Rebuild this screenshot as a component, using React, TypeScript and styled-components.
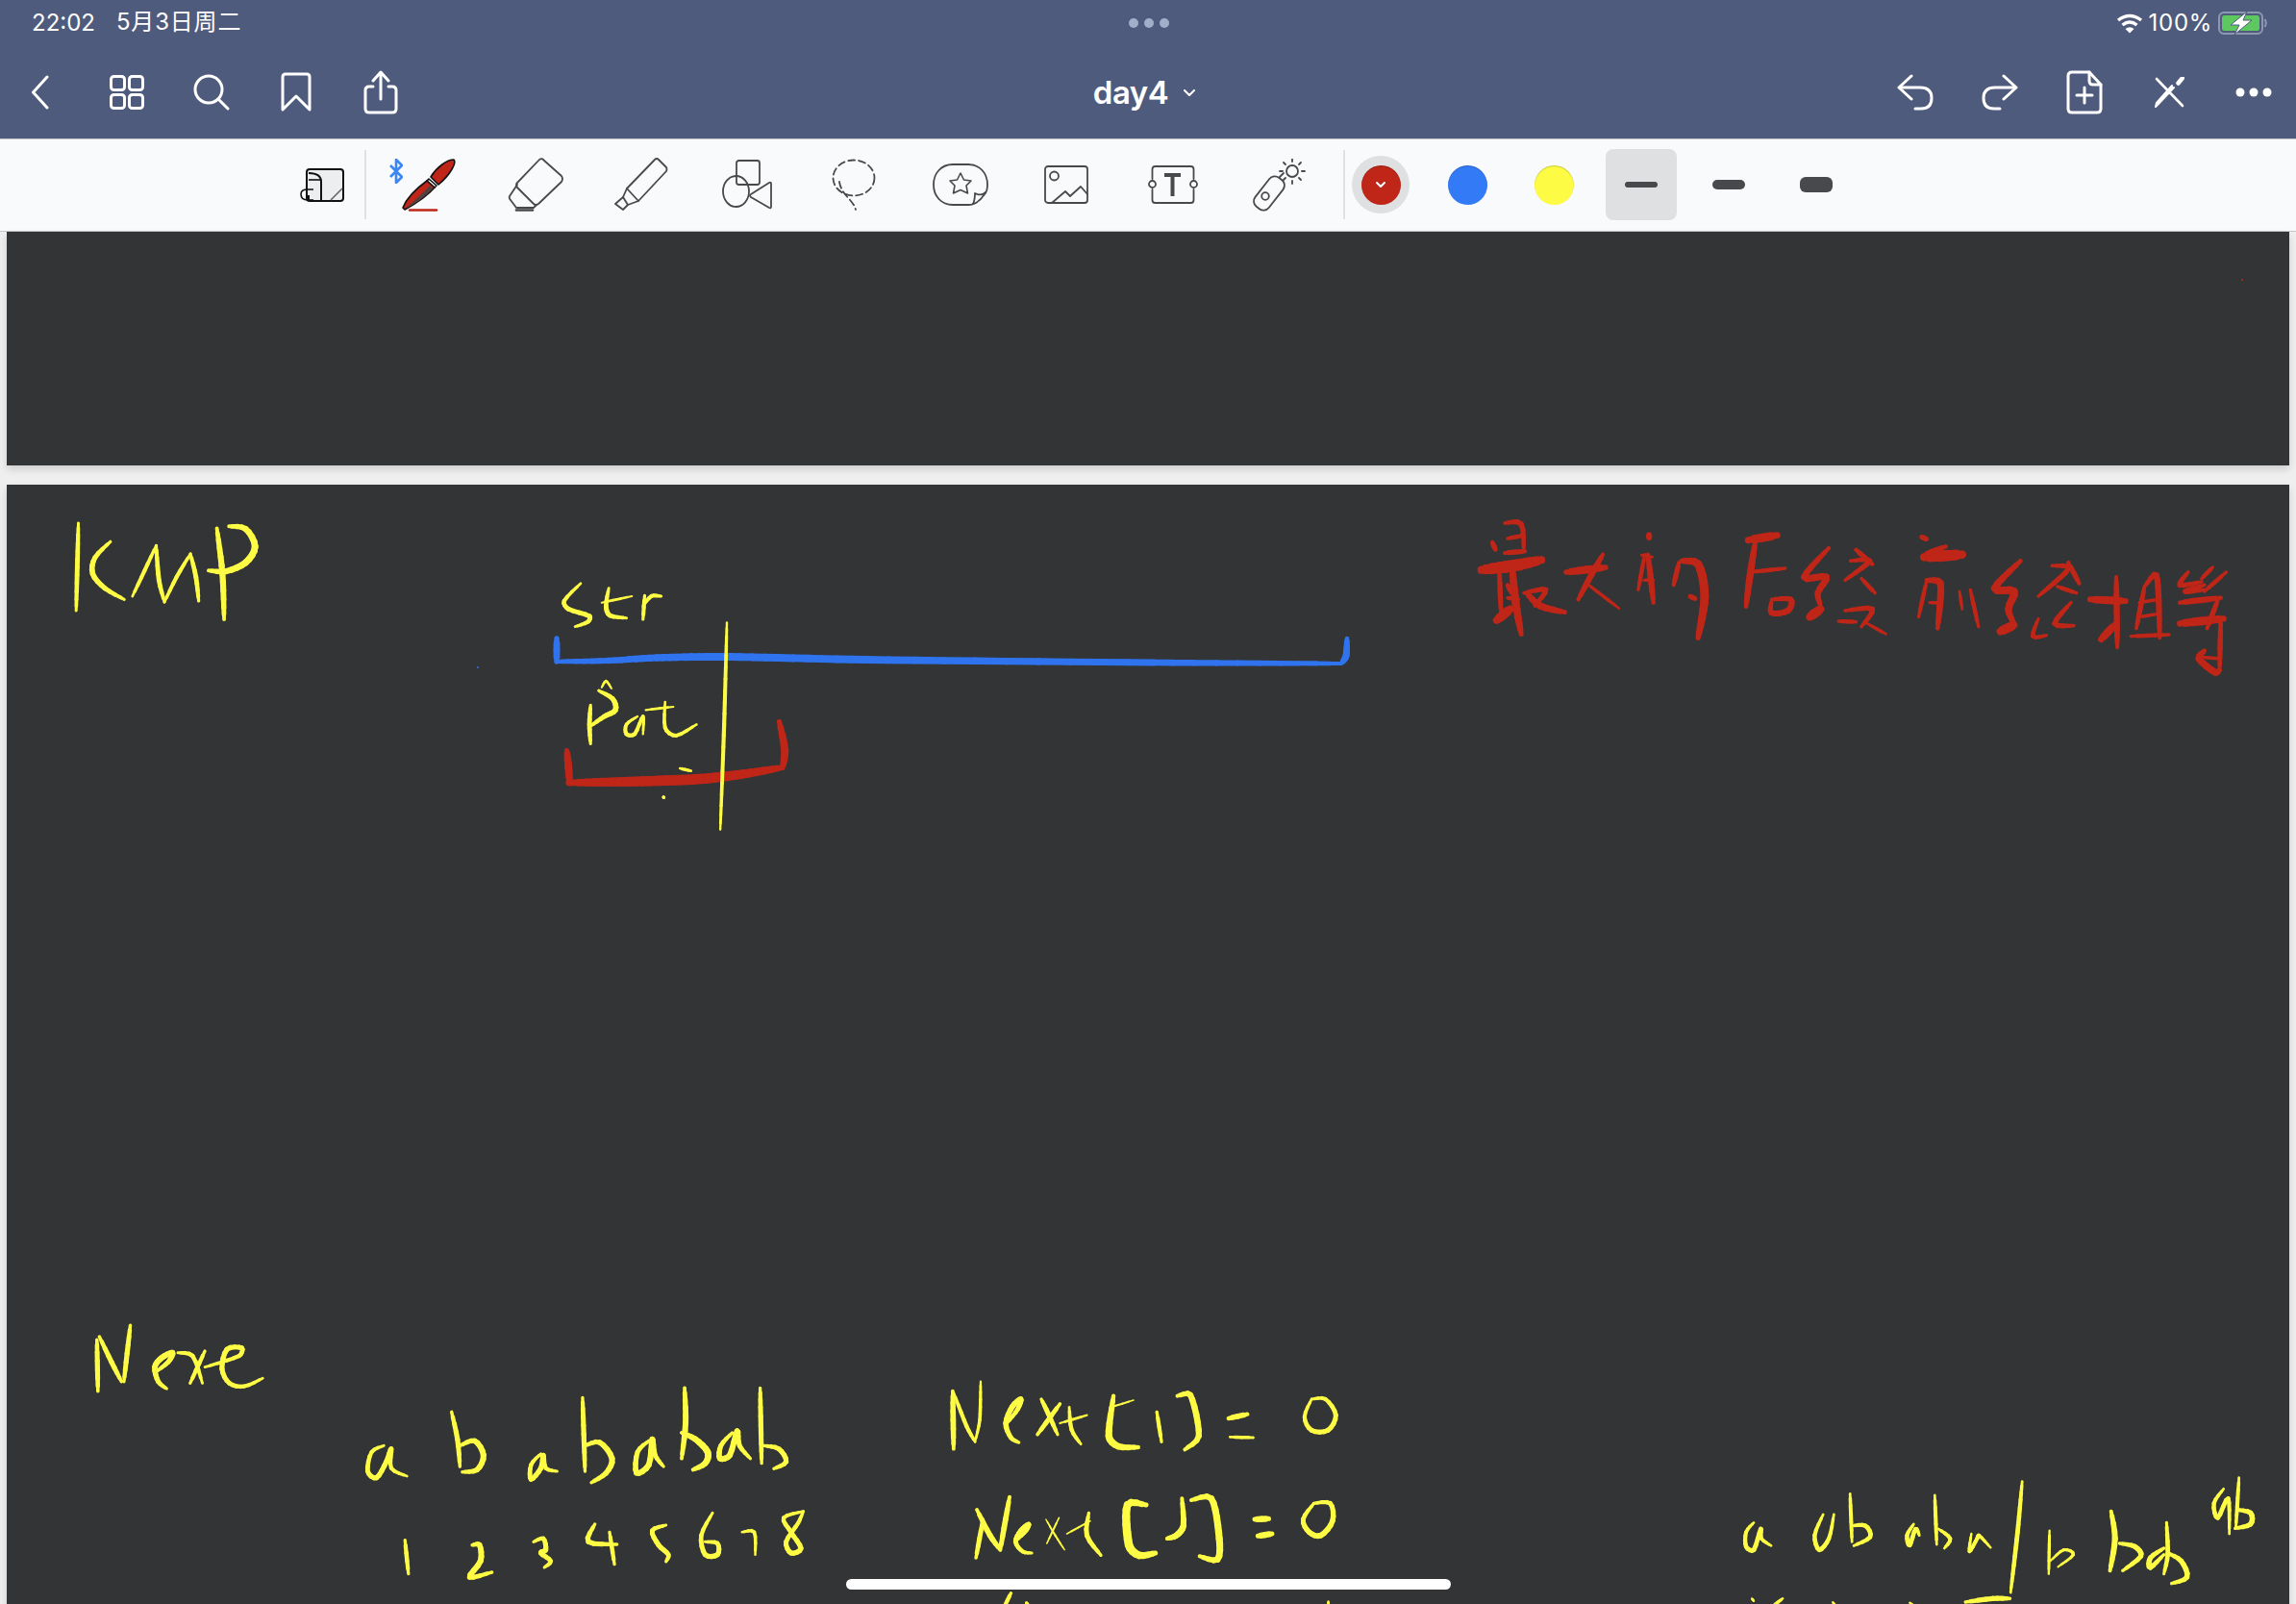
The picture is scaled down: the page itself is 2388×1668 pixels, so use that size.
import React from 'react';
import styled, { createGlobalStyle } from 'styled-components';

const colors = {
  bar: '#4f5b7d',
  toolbar: '#f9fafb',
  desk: '#efeff0',
  page: '#323436',
  icon: '#47494c',
  yellow: '#fdfb44',
  red: '#bf2618',
  blue: '#2f74ee',
};

const GlobalStyle = createGlobalStyle`
  html, body {
    margin: 0;
    padding: 0;
    background: ${colors.desk};
  }
  body {
    font-family: Inter, "Noto Sans CJK SC", sans-serif;
  }
`;

const Screen = styled.div`
  position: relative;
  width: 2388px;
  height: 1668px;
  display: flex;
  flex-direction: column;
  overflow: hidden;
`;

const Header = styled.header`
  flex: none;
  height: 144px;
  background: ${colors.bar};
  color: #fff;
  border-bottom: 1px solid #c4c6ca;
`;

const StatusBar = styled.div`
  height: 48px;
  display: grid;
  grid-template-columns: 1fr auto 1fr;
  align-items: center;
  padding: 0 29px 0 33px;
  font-size: 24px;
  line-height: 24px;
`;

const StatusLeft = styled.div`
  display: flex;
  align-items: center;
  gap: 22px;
`;

const StatusDate = styled.span`
  letter-spacing: 0.8px;
  position: relative;
  top: -1px;
`;

const StatusRight = styled.div`
  display: flex;
  justify-content: flex-end;
  align-items: center;
  gap: 6px;
  letter-spacing: 0.7px;
`;

const MultitaskDots = styled.div`
  display: flex;
  gap: 6px;
  margin-right: 2px;
`;

const MultitaskDot = styled.span`
  width: 10px;
  height: 10px;
  border-radius: 50%;
  background: #a3aeca;
`;

const NavBar = styled.nav`
  height: 96px;
  display: grid;
  grid-template-columns: 1fr auto 1fr;
  align-items: center;
`;

const NavGroup = styled.div<{ $end?: boolean }>`
  display: flex;
  justify-content: ${(p) => (p.$end ? 'flex-end' : 'flex-start')};
`;

const NavSlot = styled.div`
  width: 88px;
  height: 96px;
  display: flex;
  align-items: center;
  justify-content: center;
`;

const DocTitle = styled.div`
  display: flex;
  align-items: center;
  gap: 16px;
  margin-right: 8px;
  font-size: 33px;
  font-weight: 600;
  letter-spacing: -0.5px;
`;

const Toolbar = styled.div`
  flex: none;
  height: 94px;
  display: flex;
  align-items: center;
  padding: 0 0 1px 291px;
  background: ${colors.toolbar};
  border-bottom: 1px solid #c4c6ca;
`;

const TemplateSlot = styled.div`
  width: 88px;
  display: flex;
  justify-content: center;
`;

const Divider = styled.div<{ $gap?: number }>`
  width: 2px;
  height: 72px;
  margin-left: ${(p) => p.$gap ?? 0}px;
  background: #dfe1e3;
`;

const ToolGroup = styled.div`
  display: flex;
  margin-left: 10px;
`;

const ToolSlot = styled.div`
  position: relative;
  width: 110.5px;
  height: 72px;
  display: flex;
  align-items: center;
  justify-content: center;
`;

const BluetoothBadge = styled.span`
  position: absolute;
  left: 14px;
  top: 9px;
  display: flex;
`;

const SwatchGroup = styled.div`
  display: flex;
  gap: 30px;
  margin-left: 7px;
`;

const Swatch = styled.div<{ $active?: boolean }>`
  width: 60px;
  height: 60px;
  border-radius: 50%;
  display: flex;
  align-items: center;
  justify-content: center;
  background: ${(p) => (p.$active ? '#dfe0e2' : 'transparent')};
`;

const SwatchDot = styled.span<{ $color: string }>`
  width: 41px;
  height: 41px;
  border-radius: 50%;
  display: flex;
  align-items: center;
  justify-content: center;
  background: ${(p) => p.$color};
  box-shadow: inset 0 1px 1px rgba(0, 0, 0, 0.2);
`;

const WidthGroup = styled.div`
  display: flex;
  gap: 17px;
  margin-left: 24px;
`;

const WidthOption = styled.div<{ $active?: boolean }>`
  width: 74px;
  height: 74px;
  border-radius: 8px;
  display: flex;
  align-items: center;
  justify-content: center;
  background: ${(p) => (p.$active ? '#dfe0e2' : 'transparent')};
`;

const WidthLine = styled.span<{ $size: number }>`
  width: 34px;
  height: ${(p) => p.$size}px;
  border-radius: ${(p) => Math.min(p.$size / 2, 6)}px;
  background: ${colors.icon};
`;

const Desk = styled.main`
  flex: 1;
  min-height: 0;
  display: flex;
  flex-direction: column;
  gap: 20px;
  padding: 0 7px;
  background: ${colors.desk};
`;

const Page = styled.section<{ $grow?: boolean }>`
  position: relative;
  flex: ${(p) => (p.$grow ? '1' : 'none')};
  height: ${(p) => (p.$grow ? 'auto' : '243px')};
  background: ${colors.page};
  box-shadow: 0 4px 8px rgba(0, 0, 0, 0.14);
  overflow: hidden;
`;

const InkLayer = styled.svg`
  position: absolute;
  inset: 0;
  width: 100%;
  height: 100%;
`;

const HomeIndicator = styled.div`
  position: absolute;
  left: 880px;
  bottom: 15px;
  width: 629px;
  height: 11px;
  border-radius: 6px;
  background: #fff;
`;

// ---- ink: strokes are [width, x, y, x, y, ...] in the coordinates of a crop ----

type Stroke = number[];
type InkGroup = { ox: number; oy: number; sx: number; sy: number; weight: number; color: string; strokes: Stroke[] };

const YELLOW_TOP: Stroke[] = [
  [7, 142, 222, 140, 360, 138, 495],
  [8, 200, 280, 172, 330, 168, 380, 190, 425, 225, 460],
  [6, 240, 450, 262, 370, 283, 292],
  [7, 283, 292, 288, 400, 298, 468],
  [6, 298, 468, 320, 390, 345, 318],
  [7, 345, 318, 355, 390, 360, 465],
  [9, 393, 238, 403, 380, 406, 522],
  [10, 415, 232, 445, 240, 462, 295, 445, 345, 410, 372, 378, 370],
  [7, 1052, 410, 1022, 465, 1030, 490, 1068, 512, 1065, 530, 1042, 545],
  [7, 1103, 425, 1098, 480, 1105, 510, 1135, 518],
  [4, 1090, 470, 1145, 450],
  [6, 1168, 448, 1165, 522],
  [6, 1165, 480, 1180, 450, 1198, 450],
  [6, 1317, 532, 1312, 850, 1305, 1178],
  [7, 1070, 790, 1068, 850, 1070, 910],
  [8, 1085, 745, 1110, 770, 1115, 805, 1095, 825, 1070, 855],
  [4, 1090, 735, 1098, 715, 1108, 738],
  [6, 1155, 825, 1135, 850, 1135, 880, 1150, 880, 1165, 825, 1165, 880],
  [6, 1205, 780, 1205, 860, 1225, 885, 1262, 850],
  [4, 1170, 805, 1220, 795],
  [5, 1232, 987, 1252, 995],
  [5, 1202, 1077, 1203, 1078],
];

const RED_TOP: Stroke[] = [
  [11, 1027, 932, 1030, 985, 1032, 1035],
  [15, 1030, 1032, 1150, 1028, 1270, 1020, 1345, 1005, 1415, 985],
  [11, 1418, 985, 1422, 930, 1412, 842],
];

const RED_TITLE: Stroke[] = [
  [6, 115, 72, 145, 75, 150, 160],
  [5, 120, 120, 150, 110],
  [6, 115, 165, 152, 160],
  [6, 92, 132, 98, 155],
  [14, 72, 218, 130, 205, 182, 187],
  [6, 105, 220, 108, 355],
  [9, 128, 200, 135, 320, 145, 418],
  [6, 120, 265, 128, 290],
  [5, 120, 305, 140, 310],
  [6, 150, 290, 190, 280, 170, 330],
  [8, 155, 290, 180, 330, 225, 350],
  [11, 125, 340, 100, 375],
  [9, 228, 225, 300, 210],
  [7, 295, 170, 275, 230, 250, 310],
  [4, 265, 260, 325, 338],
  [7, 380, 108, 380, 118],
  [5, 372, 170, 360, 280],
  [7, 378, 170, 388, 320],
  [4, 366, 172, 386, 178],
  [4, 370, 250, 388, 250],
  [6, 435, 195, 425, 265],
  [10, 440, 190, 470, 200, 482, 300, 470, 430],
  [6, 455, 300, 465, 308],
  [10, 562, 125, 615, 110],
  [8, 575, 130, 565, 240, 558, 332],
  [5, 565, 225, 630, 213],
  [7, 605, 310, 640, 310, 635, 345, 605, 352, 605, 315],
  [8, 710, 150, 665, 240, 705, 240, 690, 290, 695, 330],
  [11, 695, 340, 675, 365],
  [6, 760, 155, 790, 200],
  [6, 750, 190, 785, 190, 740, 250],
  [5, 770, 245, 795, 290],
  [6, 740, 345, 790, 340, 770, 395],
  [5, 728, 378, 760, 380],
  [4, 780, 385, 815, 418],
  [6, 880, 115, 890, 122],
  [13, 885, 178, 955, 170],
  [6, 925, 145, 890, 165],
  [5, 890, 250, 875, 365],
  [8, 890, 250, 915, 260, 910, 400],
  [4, 895, 320, 912, 320],
  [4, 950, 285, 955, 340],
  [5, 970, 280, 985, 395],
  [9, 1062, 190, 1015, 275, 1050, 285, 1040, 340, 1050, 385],
  [11, 1050, 390, 1025, 410],
  [6, 1150, 195, 1170, 260],
  [6, 1120, 205, 1150, 215, 1095, 300],
  [5, 1130, 270, 1165, 290],
  [6, 1155, 320, 1125, 385, 1160, 392],
  [5, 1095, 370, 1085, 425, 1110, 422],
  [9, 1190, 310, 1255, 315],
  [7, 1238, 240, 1240, 460],
  [9, 1235, 390, 1210, 435],
  [6, 1290, 270, 1275, 400],
  [7, 1290, 270, 1312, 235, 1318, 430],
  [4, 1280, 320, 1315, 310],
  [4, 1280, 365, 1315, 355],
  [5, 1265, 425, 1335, 420],
  [6, 1370, 225, 1355, 265, 1395, 255],
  [6, 1400, 265, 1365, 285, 1400, 280],
  [5, 1440, 225, 1400, 285],
  [5, 1415, 210, 1395, 245],
  [7, 1355, 320, 1430, 305],
  [10, 1355, 385, 1435, 370],
  [6, 1425, 310, 1405, 400],
  [6, 1430, 370, 1428, 530],
  [8, 1400, 470, 1390, 495, 1420, 538, 1428, 530],
  [4, 1395, 490, 1430, 495],
];

const YELLOW_NEXT: Stroke[] = [
  [7, 80, 160, 82, 320],
  [7, 85, 150, 110, 230, 130, 290],
  [7, 148, 115, 135, 290],
  [8, 198, 262, 226, 228, 234, 200, 212, 216, 198, 245, 205, 290, 222, 312],
  [6, 245, 200, 275, 210, 295, 295],
  [6, 300, 195, 270, 295],
  [7, 300, 245, 370, 210, 375, 185, 345, 190, 335, 250, 350, 295, 380, 305, 418, 280],
  [7, 665, 490, 640, 510, 632, 570, 650, 590, 670, 540, 680, 500, 680, 560, 712, 585],
  [7, 803, 385, 815, 470, 820, 555],
  [8, 820, 490, 850, 475, 868, 520, 855, 565, 825, 572],
  [7, 985, 515, 965, 550, 965, 595, 985, 560, 990, 520, 995, 560, 1018, 570],
  [7, 1070, 340, 1075, 570],
  [8, 1075, 490, 1105, 480, 1130, 530, 1118, 575, 1088, 605],
  [8, 1205, 475, 1182, 510, 1180, 575, 1205, 550, 1212, 470, 1218, 520, 1235, 555],
  [8, 1278, 310, 1280, 420, 1272, 530],
  [9, 1272, 450, 1300, 470, 1325, 510, 1320, 545, 1295, 565],
  [8, 1375, 450, 1352, 490, 1350, 530, 1370, 520, 1385, 445, 1390, 490, 1412, 530],
  [7, 1432, 310, 1435, 545],
  [7, 1440, 490, 1470, 500, 1485, 540, 1460, 562],
  [6, 708, 785, 715, 890],
  [8, 845, 800, 860, 800, 862, 850, 840, 900, 885, 885],
  [7, 970, 790, 990, 780, 995, 815, 985, 825, 1005, 850, 992, 870],
  [7, 1095, 735, 1082, 790, 1140, 798],
  [6, 1125, 760, 1135, 860],
  [7, 1240, 738, 1212, 755, 1225, 800, 1245, 830, 1240, 852],
  [7, 1335, 700, 1312, 770, 1320, 830, 1345, 830, 1345, 795, 1320, 790],
  [5, 1395, 760, 1420, 760, 1422, 830],
  [7, 1520, 695, 1480, 715, 1495, 760, 1515, 810, 1495, 825, 1485, 790, 1510, 730, 1520, 695],
];

const YELLOW_FORMULA: Stroke[] = [
  [8, 270, 140, 272, 320],
  [6, 272, 145, 300, 250, 318, 298],
  [5, 330, 110, 328, 230, 318, 298],
  [8, 388, 238, 410, 195, 416, 165, 398, 188, 384, 240, 395, 285, 412, 300],
  [7, 460, 165, 475, 210, 495, 275],
  [7, 500, 180, 452, 275],
  [6, 520, 190, 525, 260, 545, 305],
  [4, 500, 240, 558, 215],
  [10, 615, 155, 605, 280, 625, 312, 668, 315],
  [3, 610, 190, 658, 168],
  [6, 708, 205, 718, 298],
  [9, 752, 155, 780, 152, 798, 280, 768, 322],
  [8, 862, 225, 902, 212],
  [5, 865, 283, 915, 285],
  [7, 1040, 165, 1025, 220, 1040, 262, 1075, 262, 1092, 215, 1070, 165, 1040, 165],
  [7, 335, 540, 320, 660],
  [8, 322, 510, 350, 590, 372, 635],
  [8, 392, 470, 372, 635],
  [7, 408, 605, 428, 575, 433, 555, 416, 575, 405, 610, 420, 640, 440, 645],
  [3, 470, 540, 490, 590, 510, 635],
  [3, 498, 535, 472, 615],
  [7, 562, 520, 558, 590, 588, 652],
  [3, 515, 585, 565, 545],
  [12, 685, 495, 645, 495, 648, 620, 670, 652, 705, 645],
  [9, 762, 475, 765, 560, 750, 590, 730, 600],
  [10, 782, 480, 825, 475, 842, 600, 838, 665, 800, 655],
  [9, 918, 540, 948, 538],
  [9, 925, 592, 955, 585],
  [8, 1045, 490, 1022, 540, 1035, 580, 1060, 590, 1085, 545, 1080, 490, 1045, 490],
  [6, 395, 770, 380, 815],
  [5, 428, 800, 432, 808],
  [4, 1076, 796, 1076, 815],
];

const YELLOW_RIGHT: Stroke[] = [
  [7, 160, 250, 140, 280, 140, 325, 160, 335, 178, 270, 180, 300, 205, 322],
  [7, 340, 225, 318, 290, 330, 335, 355, 300, 368, 225],
  [6, 410, 160, 415, 310],
  [7, 415, 260, 450, 260, 462, 295, 420, 322],
  [7, 575, 255, 558, 290, 565, 320, 580, 270, 590, 290],
  [6, 630, 165, 635, 318],
  [6, 640, 270, 670, 300, 655, 330],
  [6, 725, 285, 720, 340, 740, 300, 745, 290, 775, 328],
  [7, 857, 122, 845, 280, 827, 468],
  [5, 928, 275, 926, 410],
  [5, 930, 370, 965, 335, 990, 350, 950, 388],
  [9, 1088, 215, 1098, 300, 1085, 400],
  [8, 1110, 315, 1150, 325, 1165, 355, 1118, 400],
  [8, 1225, 330, 1190, 360, 1190, 390, 1225, 350],
  [7, 1232, 250, 1235, 350, 1225, 410],
  [8, 1235, 345, 1270, 370, 1285, 420, 1245, 440],
  [7, 1380, 145, 1355, 190, 1365, 235, 1392, 175, 1395, 285],
  [6, 1420, 110, 1412, 265],
  [8, 1415, 210, 1450, 220, 1450, 255, 1410, 268],
  [4, 155, 487, 160, 495],
  [5, 235, 487, 210, 510],
  [4, 365, 498, 372, 510],
  [4, 565, 500, 575, 510],
  [8, 710, 498, 780, 487, 825, 487],
];

const BLUE_LINE: Stroke[] = [
  [7, 579, 664, 579, 688],
  [8, 579, 688, 632, 687, 683, 684, 758, 683, 900, 686, 1200, 689, 1395, 690],
  [7, 1396, 689, 1400, 682, 1401, 664],
];

const inkGroups: InkGroup[] = [
  { ox: 0, oy: 0, sx: 1, sy: 1, weight: 1, color: colors.blue, strokes: BLUE_LINE },
  { ox: 0, oy: 470, sx: 1.742, sy: 3, weight: 0.72, color: colors.red, strokes: RED_TOP },
  { ox: 0, oy: 470, sx: 1.742, sy: 3, weight: 0.7, color: colors.yellow, strokes: YELLOW_TOP },
  { ox: 1500, oy: 520, sx: 1.766, sy: 3, weight: 0.9, color: colors.red, strokes: RED_TITLE },
  { ox: 60, oy: 1340, sx: 1.96, sy: 3, weight: 0.75, color: colors.yellow, strokes: YELLOW_NEXT },
  { ox: 860, oy: 1400, sx: 2.063, sy: 3, weight: 0.72, color: colors.yellow, strokes: YELLOW_FORMULA },
  { ox: 1760, oy: 1500, sx: 2.497, sy: 3, weight: 0.68, color: colors.yellow, strokes: YELLOW_RIGHT },
];

type Pt = [number, number];

// tangent at b, never longer than the span it leads into, so long spans don't overshoot
function tangent(a: Pt, b: Pt, c: Pt, limit: number): Pt {
  const tx = (c[0] - a[0]) / 2;
  const ty = (c[1] - a[1]) / 2;
  const len = Math.hypot(tx, ty) || 1;
  const k = Math.min(1, limit / len);
  return [tx * k, ty * k];
}

function sampleStroke(pts: Pt[]) {
  const out: Pt[] = [];
  for (let i = 0; i < pts.length - 1; i++) {
    const p0 = pts[Math.max(i - 1, 0)];
    const p1 = pts[i];
    const p2 = pts[i + 1];
    const p3 = pts[Math.min(i + 2, pts.length - 1)];
    const span = Math.hypot(p2[0] - p1[0], p2[1] - p1[1]);
    const m1 = tangent(p0, p1, p2, span);
    const m2 = tangent(p1, p2, p3, span);
    const steps = Math.max(4, Math.min(10, Math.ceil(span / 8)));
    for (let k = 0; k < steps; k++) {
      const t = k / steps;
      const t2 = t * t;
      const t3 = t2 * t;
      const h = (a: number, b: number, ma: number, mb: number) =>
        (2 * t3 - 3 * t2 + 1) * a + (t3 - 2 * t2 + t) * ma + (-2 * t3 + 3 * t2) * b + (t3 - t2) * mb;
      out.push([h(p1[0], p2[0], m1[0], m2[0]), h(p1[1], p2[1], m1[1], m2[1])]);
    }
  }
  out.push(pts[pts.length - 1]);
  return out;
}

function InkStroke({ group, stroke }: { group: InkGroup; stroke: Stroke }) {
  const [width, ...flat] = stroke;
  const pts: Pt[] = [];
  for (let i = 0; i < flat.length; i += 2) {
    pts.push([group.ox + flat[i] / group.sx, group.oy + flat[i + 1] / group.sy]);
  }
  const line = sampleStroke(pts);
  const base = width * group.weight;
  return (
    <g stroke={group.color} strokeLinecap="round">
      {line.slice(1).map((p, i) => {
        const t = (i + 0.5) / (line.length - 1);
        const w = base * (0.4 + 0.6 * Math.pow(Math.sin(Math.PI * t), 0.5));
        return <line key={i} x1={line[i][0]} y1={line[i][1]} x2={p[0]} y2={p[1]} strokeWidth={w} />;
      })}
    </g>
  );
}

// ---- icons ----

type SvgProps = { w: number; h: number; children: React.ReactNode; stroke?: string; sw?: number };

const Svg = ({ w, h, children, stroke = '#fff', sw = 3 }: SvgProps) => (
  <svg
    width={w}
    height={h}
    viewBox={`0 0 ${w} ${h}`}
    fill="none"
    stroke={stroke}
    strokeWidth={sw}
    strokeLinecap="round"
    strokeLinejoin="round"
  >
    {children}
  </svg>
);

const Back = () => (
  <Svg w={22} h={36}>
    <path d="M16 2 L1.5 18 L16 34" />
  </Svg>
);
const Grid = () => (
  <Svg w={36} h={36}>
    <rect x="1.5" y="1.5" width="14" height="14" rx="3" />
    <rect x="20.5" y="1.5" width="14" height="14" rx="3" />
    <rect x="1.5" y="20.5" width="14" height="14" rx="3" />
    <rect x="20.5" y="20.5" width="14" height="14" rx="3" />
  </Svg>
);
const Search = () => (
  <Svg w={38} h={38}>
    <circle cx="16" cy="16" r="14" />
    <path d="M26 26 L36 36" />
  </Svg>
);
const Bookmark = () => (
  <Svg w={32} h={42}>
    <path d="M2 39 V5 Q2 2 5 2 H27 Q30 2 30 5 V39 L16 25 Z" />
  </Svg>
);
const Share = () => (
  <Svg w={36} h={46}>
    <path d="M10 17 H6 Q2 17 2 21 V40 Q2 44 6 44 H30 Q34 44 34 40 V21 Q34 17 30 17 H26" />
    <path d="M18 30 V3 M10 11 L18 2 L26 11" />
  </Svg>
);
const Chevron = ({ color = '#fff', size = 12 }: { color?: string; size?: number }) => (
  <Svg w={size} h={Math.round(size * 0.62)} stroke={color} sw={2}>
    <path d={`M1 1 L${size / 2} ${Math.round(size * 0.62) - 1} L${size - 1} 1`} />
  </Svg>
);
const Undo = () => (
  <Svg w={38} h={38}>
    <path d="M15 2 L2 14 L15 26" />
    <path d="M3 14 H24 Q36 14 36 25 Q36 36 25 36 H19" />
  </Svg>
);
const Redo = () => (
  <Svg w={38} h={38}>
    <path d="M23 2 L36 14 L23 26" />
    <path d="M35 14 H14 Q2 14 2 25 Q2 36 13 36 H19" />
  </Svg>
);
const DocPlus = () => (
  <Svg w={38} h={46}>
    <path d="M2 6 Q2 2 6 2 H24 L36 15 V40 Q36 44 32 44 H6 Q2 44 2 40 Z" />
    <path d="M24 2 V11 Q24 15 28 15 H36" />
    <path d="M19 18 V34 M11 26 H27" />
  </Svg>
);
const ToolsCross = () => (
  <Svg w={32} h={32} sw={2.6}>
    <path d="M3 2 L30 30" />
    <path d="M30 1 L25.5 6.5" strokeWidth={4.5} />
    <path d="M21 11 L5 28 L2 31 L3 27 L19 9" fill="#fff" strokeWidth={2} />
  </Svg>
);
const MoreDots = () => (
  <svg width="38" height="10" viewBox="0 0 38 10" fill="#fff">
    <circle cx="5" cy="5" r="4.5" />
    <circle cx="19" cy="5" r="4.5" />
    <circle cx="33" cy="5" r="4.5" />
  </svg>
);
const Wifi = () => (
  <svg width="28" height="21" viewBox="0 0 28 21" fill="none" stroke="#fff" strokeWidth="3.4">
    <path d="M2 7 Q14 -2 26 7" />
    <path d="M6.5 12 Q14 6 21.5 12" />
    <path d="M14 20.5 L9.5 16 Q14 12.6 18.5 16 Z" fill="#fff" stroke="none" />
  </svg>
);
const Battery = () => (
  <svg width="52" height="24" viewBox="0 0 52 24" fill="none">
    <rect x="1" y="1" width="45" height="22" rx="5" stroke="#8e97af" strokeWidth="2" />
    <rect x="4" y="4" width="39" height="16" rx="2.5" fill="#5dc85f" />
    <path d="M48.5 8 Q51 12 48.5 16" stroke="#8e97af" strokeWidth="2" />
    <path d="M30 0 L13 14 H22 L17 24 L35 9 H26 Z" fill="#fff" stroke={colors.bar} strokeWidth="1" />
  </svg>
);

const TemplateIcon = () => (
  <svg width="46" height="35" viewBox="0 0 46 35" fill="none" stroke="#111" strokeWidth="2">
    <rect x="7" y="1" width="38" height="33" rx="3" fill="#eceef0" />
    <path d="M9 34 V28 M22 34 V14 Q22 5 9 5" fill="none" />
    <path d="M9 12 H22" strokeWidth="1.6" />
    <path d="M14 22 H8 Q1 22 1 27 Q1 33 8 33 H14" strokeWidth="1.6" />
    <path d="M32 33 L44 21" stroke="#666" strokeWidth="1.6" />
  </svg>
);
const PenIcon = () => (
  <svg width="57" height="55" viewBox="0 0 57 55" stroke="#111" strokeWidth="1.6" strokeLinejoin="round">
    <path d="M30 19 C36 9 47 1 54 1 C57 4 51 16 38 27 Z" fill={colors.red} />
    <path d="M28 21 L36 28 L34 30 L26 23 Z" fill="#fff" />
    <path d="M26 23 L34 30 C26 39 14 47 3 53 L1 51 C5 41 15 31 26 23 Z" fill={colors.red} />
    <path d="M32 31 C25 39 14 47 4 52 C12 44 22 36 29 28 Z" fill="#54403e" stroke="none" />
    <path d="M8 53.5 H36" stroke={colors.red} strokeWidth="2.5" strokeLinecap="round" />
  </svg>
);
const BluetoothIcon = () => (
  <svg width="14" height="26" viewBox="0 0 14 26" fill="none" stroke="#3a86f5" strokeWidth="2.6" strokeLinejoin="round">
    <path d="M1 7 L13 19 L7 25 V1 L13 7 L1 19" />
  </svg>
);
const EraserIcon = () => (
  <Svg w={58} h={56} stroke={colors.icon} sw={1.8}>
    <path d="M33 2 Q36 0 38 3 L56 19 Q58 22 56 25 L32 48 Q29 50 27 48 L10 31 Q8 28 10 26 Z" />
    <path d="M10 28 L2 40 Q1 42 3 44 L9 52 L27 52 L30 49" />
    <path d="M9 54.5 H26" strokeWidth={2.6} />
  </Svg>
);
const HighlighterIcon = () => (
  <Svg w={56} h={56} stroke={colors.icon} sw={1.8}>
    <path d="M42 2 Q44 0 46 2 L54 10 Q55 12 54 14 L25 45 L13 32 Z" />
    <path d="M13 32 L9 41 L14 49 L25 45" />
    <path d="M9 41 L1 48 L9 54 L14 49" />
  </Svg>
);
const ShapesIcon = () => (
  <Svg w={53} h={52} stroke={colors.icon} sw={1.8}>
    <rect x="15" y="1" width="24" height="25" rx="2.5" />
    <ellipse cx="14.5" cy="33" rx="13.5" ry="16" />
    <path d="M51 25 V49 Q51 51 49 50 L30 39 Q28 37 30 36 L49 24 Q51 23 51 25 Z" />
  </Svg>
);
const LassoIcon = () => (
  <Svg w={46} h={54} stroke={colors.icon} sw={1.8}>
    <g strokeDasharray="7 4">
      <ellipse cx="23" cy="20" rx="21.5" ry="18.5" />
      <path d="M8 24 C10 38 22 42 25 53" />
    </g>
  </Svg>
);
const StickerIcon = () => (
  <Svg w={58} h={44} stroke={colors.icon} sw={1.8}>
    <path d="M21 1 H37 C49 1 57 10 57 22 C57 27 56 30 54 32 C50 38 44 43 37 43 H21 C9 43 1 34 1 22 C1 10 9 1 21 1 Z" />
    <path d="M42 42 C44 38 44 34 44 31 C48 33 52 33 55 30" />
    <path d="M29 10 L32.5 17 L40 18 L35 23 L36.5 31 L29 27.5 L21.5 31 L23 23 L18 18 L25.5 17 Z" strokeWidth={1.6} />
  </Svg>
);
const ImageIcon = () => (
  <Svg w={46} h={40} stroke={colors.icon} sw={1.8}>
    <rect x="1" y="1" width="44" height="38" rx="3" />
    <ellipse cx="10.5" cy="11" rx="4.5" ry="4.5" />
    <path d="M8 39 L22 27 L27 32 L38 22 L45 30" />
  </Svg>
);
const TextIcon = () => (
  <Svg w={52} h={40} stroke={colors.icon} sw={1.8}>
    <path d="M4.5 14 V4 Q4.5 1 7.5 1 H44.5 Q47.5 1 47.5 4 V14" />
    <path d="M4.5 25 V36 Q4.5 39 7.5 39 H44.5 Q47.5 39 47.5 36 V25" />
    <circle cx="4.5" cy="19.5" r="3.5" />
    <circle cx="47.5" cy="19.5" r="3.5" />
    <path d="M17 10 H34 M25.5 10 V32" strokeWidth={4} strokeLinecap="butt" />
  </Svg>
);
const LaserIcon = () => (
  <Svg w={57} h={55} stroke={colors.icon} sw={1.8}>
    <rect x="-9" y="-19" width="18" height="38" rx="7" transform="translate(18 36) rotate(38)" />
    <circle cx="14" cy="39" r="3.8" />
    <path d="M29 19 L33 15" />
    <circle cx="42" cy="13" r="6" />
    <path d="M42 0 V3 M42 23 V26 M29 13 H32 M52 13 H55 M33 4 L35 6 M49 20 L51 22 M51 4 L49 6 M33 22 L35 20" />
  </Svg>
);

const tools = [EraserIcon, HighlighterIcon, ShapesIcon, LassoIcon, StickerIcon, ImageIcon, TextIcon, LaserIcon];

export default function App() {
  return (
    <Screen>
      <GlobalStyle />
      <Header>
        <StatusBar>
          <StatusLeft>
            <span>22:02</span>
            <StatusDate>5月3日周二</StatusDate>
          </StatusLeft>
          <MultitaskDots>
            <MultitaskDot />
            <MultitaskDot />
            <MultitaskDot />
          </MultitaskDots>
          <StatusRight>
            <Wifi />
            <span>100%</span>
            <Battery />
          </StatusRight>
        </StatusBar>
        <NavBar>
          <NavGroup>
            <NavSlot><Back /></NavSlot>
            <NavSlot><Grid /></NavSlot>
            <NavSlot><Search /></NavSlot>
            <NavSlot><Bookmark /></NavSlot>
            <NavSlot><Share /></NavSlot>
          </NavGroup>
          <DocTitle>
            day4
            <Chevron />
          </DocTitle>
          <NavGroup $end>
            <NavSlot><Undo /></NavSlot>
            <NavSlot><Redo /></NavSlot>
            <NavSlot><DocPlus /></NavSlot>
            <NavSlot><ToolsCross /></NavSlot>
            <NavSlot><MoreDots /></NavSlot>
          </NavGroup>
        </NavBar>
      </Header>

      <Toolbar>
        <TemplateSlot>
          <TemplateIcon />
        </TemplateSlot>
        <Divider />
        <ToolGroup>
          <ToolSlot>
            <BluetoothBadge>
              <BluetoothIcon />
            </BluetoothBadge>
            <PenIcon />
          </ToolSlot>
          {tools.map((Tool, i) => (
            <ToolSlot key={i}>
              <Tool />
            </ToolSlot>
          ))}
        </ToolGroup>
        <Divider $gap={11.5} />
        <SwatchGroup>
          <Swatch $active>
            <SwatchDot $color={colors.red}>
              <Chevron size={10} />
            </SwatchDot>
          </Swatch>
          <Swatch>
            <SwatchDot $color="#337bf6" />
          </Swatch>
          <Swatch>
            <SwatchDot $color="#fdfb44" />
          </Swatch>
        </SwatchGroup>
        <WidthGroup>
          <WidthOption $active>
            <WidthLine $size={6} />
          </WidthOption>
          <WidthOption>
            <WidthLine $size={10} />
          </WidthOption>
          <WidthOption>
            <WidthLine $size={16} />
          </WidthOption>
        </WidthGroup>
      </Toolbar>

      <Desk>
        <Page>
          <InkLayer viewBox="7 241 2374 243">
            <circle cx="2332" cy="291" r="1" fill={colors.red} />
          </InkLayer>
        </Page>
        <Page $grow>
          <InkLayer viewBox="7 504 2374 1164">
            <circle cx="497" cy="694" r="1" fill={colors.blue} />
            {inkGroups.map((group, g) =>
              group.strokes.map((stroke, s) => <InkStroke key={`${g}-${s}`} group={group} stroke={stroke} />)
            )}
          </InkLayer>
        </Page>
      </Desk>
      <HomeIndicator />
    </Screen>
  );
}
